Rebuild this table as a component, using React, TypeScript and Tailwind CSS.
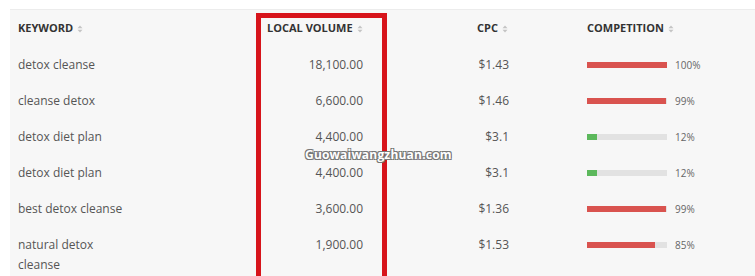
const rows = [
  { keyword: "detox cleanse", volume: "18,100.00", cpc: "$1.43", comp: 100 },
  { keyword: "cleanse detox", volume: "6,600.00", cpc: "$1.46", comp: 99 },
  { keyword: "detox diet plan", volume: "4,400.00", cpc: "$3.1", comp: 12 },
  { keyword: "detox diet plan", volume: "4,400.00", cpc: "$3.1", comp: 12 },
  { keyword: "best detox cleanse", volume: "3,600.00", cpc: "$1.36", comp: 99 },
  { keyword: "natural detox cleanse", volume: "1,900.00", cpc: "$1.53", comp: 85 },
];

function SortIcon() {
  return (
    <svg width="6" height="8" viewBox="0 0 6 8" className="ml-[4px] inline-block">
      <path d="M3 0.5 L5.5 3.2 H0.5 Z" fill="#c4c4c4" />
      <path d="M3 7.5 L5.5 4.8 H0.5 Z" fill="#c4c4c4" />
    </svg>
  );
}

function Bar({ value }: { value: number }) {
  const low = value < 50;
  return (
    <div className="flex items-center">
      <div className="h-[6px] w-[80px] bg-[#e2e2e2]">
        <div
          className={low ? "h-full bg-[#5cb85c]" : "h-full bg-[#d9534f]"}
          style={{ width: `${value}%` }}
        />
      </div>
      <span className="ml-[8px] text-[10px] text-[#666]">{value}%</span>
    </div>
  );
}

export default function App() {
  return (
    <div className="relative h-[276px] w-[755px] overflow-hidden bg-white font-['Open_Sans',sans-serif]">
      <div className="ml-[10px] mt-[9px] h-[267px] border-t border-[#ececec] bg-[#f7f7f7]">
        <div className="grid grid-cols-[247px_130px_133px_1fr] text-[11px] font-bold uppercase text-[#333]">
          <div className="flex h-[37px] items-center pl-[8px]">
            Keyword
            <SortIcon />
          </div>
          <div className="flex h-[37px] items-center pl-[10px]">
            Local Volume
            <SortIcon />
          </div>
          <div className="flex h-[37px] items-center justify-end pr-[12px]">
            CPC
            <SortIcon />
          </div>
          <div className="flex h-[37px] items-center pl-[67px]">
            Competition
            <SortIcon />
          </div>
        </div>
        {rows.map((r, i) => (
          <div
            key={i}
            className="grid grid-cols-[247px_130px_133px_1fr] text-[12px] leading-[20px] text-[#555]"
          >
            <div className="min-h-[36px] pl-[8px] pt-[8px]">
              <div className="max-w-[120px]">{r.keyword}</div>
            </div>
            <div className="pr-[24px] pt-[8px] text-right">{r.volume}</div>
            <div className="pr-[11px] pt-[8px] text-right">{r.cpc}</div>
            <div className="flex h-[36px] items-center pl-[67px]">
              <Bar value={r.comp} />
            </div>
          </div>
        ))}
      </div>

      <div className="absolute left-[256px] top-[13px] h-[300px] w-[131px] border-[5px] border-[#d7141b]" />

      <div className="absolute left-[305px] top-[145px] text-[12px] font-bold leading-[20px] tracking-[0.2px] text-white [text-shadow:1px_1px_0_#777,-1px_-1px_0_#777,1px_-1px_0_#777,-1px_1px_0_#777]">
        Guowaiwangzhuan.com
      </div>
    </div>
  );
}
